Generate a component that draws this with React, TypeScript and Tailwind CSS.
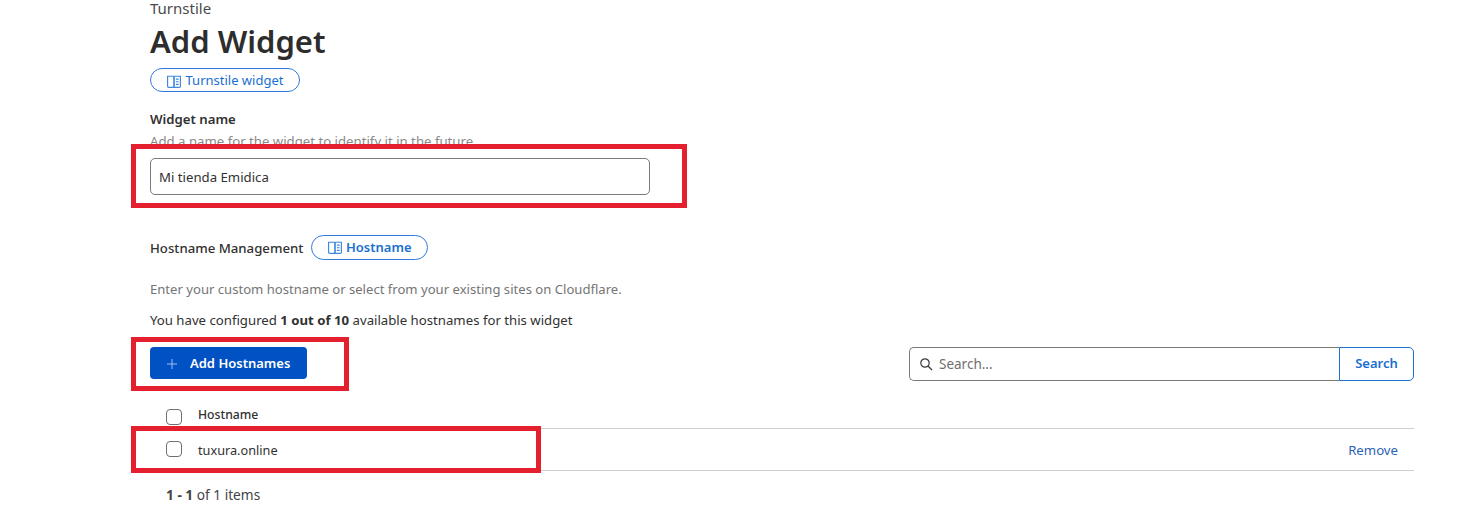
import React from 'react';

const BookIcon = ({ className }: { className?: string }) => (
  <svg viewBox="1 1.5 12 11" fill="none" stroke="currentColor" strokeWidth="1" className={className}>
    <path d="M1.5 2.5h4.5c.6 0 1 .4 1 1v8.5H2.5c-.6 0-1-.4-1-1z" />
    <path d="M12.5 2.5H7v9.5h4.5c.6 0 1-.4 1-1z" />
    <path d="M8.6 5h2.4M8.6 7.2h2.4M8.6 9.4h2.4" />
  </svg>
);

const DocPill = ({ label, className }: { label: string; className: string }) => (
  <a className={`flex items-center justify-center rounded-full border border-[#2f7bdc] bg-white text-[#1a6fd0] ${className}`}>
    <BookIcon className="w-[14px] h-[13px] text-[#3f88e0]" />
    {label}
  </a>
);

const Checkbox = ({ className = '' }: { className?: string }) => (
  <span className={`block w-4 h-4 rounded-[4px] border border-[#6f6f6f] bg-white ${className}`} />
);

// red annotation boxes drawn on top of the screenshot
const RedBox = ({ className }: { className: string }) => (
  <div className={`absolute border-[5px] border-[#e5202e] pointer-events-none ${className}`} />
);

export default function App() {
  return (
    <div className="relative h-[532px] w-[1457px] overflow-hidden bg-white font-['Noto_Sans','Open_Sans',sans-serif] text-[#313131]">
      <div className="pl-[150px] pr-[43px] pt-0">
        <p className="text-[15px] leading-[17px] text-[#4a4a4a]">Turnstile</p>
        <h1 className="mt-[6px] text-[31px] leading-[36px] font-semibold text-[#2d2d2d]">Add Widget</h1>
        <DocPill label="Turnstile widget" className="mt-[9px] pt-[2px] gap-[5px] w-[150px] h-[24px] text-[13px]" />

        <p className="mt-[18px] text-[13.2px] leading-[18px] font-semibold">Widget name</p>
        <p className="mt-[4px] text-[13.2px] leading-[18px] text-[#8a8a8a] h-[18px] overflow-hidden">Add a name for the widget to identify it in the future</p>
        <div className="mt-[8px] flex items-center w-[500px] h-[37px] px-2 pt-[2px] rounded-[5px] border border-[#7a7a7a] text-[13.2px]">Mi tienda Emidica</div>

        <div className="mt-[40px] flex items-center gap-2">
          <span className="mt-[3px] text-[13.2px] font-medium">Hostname Management</span>
          <DocPill label="Hostname" className="gap-[4px] w-[117px] h-[25px] text-[13px] font-semibold" />
        </div>
        <p className="mt-[20px] text-[13.1px] leading-[18px] text-[#757575]">Enter your custom hostname or select from your existing sites on Cloudflare.</p>
        <p className="mt-[13px] text-[13.2px] leading-[18px]">You have configured <b className="font-bold">1 out of 10</b> available hostnames for this widget</p>

        <div className="mt-[18px] flex items-start justify-between">
          <button className="flex items-center gap-[13px] h-[32px] w-[157px] pl-[17px] pt-[2px] rounded-[4px] bg-[#0051c3] text-white text-[13px] font-semibold">
            <svg viewBox="0 0 10 10" className="w-[10px] h-[10px]" stroke="#9cc0f0" strokeWidth="1"><path d="M5 0v10M0 5h10" /></svg>
            Add Hostnames
          </button>
          <div className="flex h-[34px] w-[505px]">
            <div className="flex flex-1 items-center gap-[6px] pl-[9px] rounded-l-[5px] border border-r-0 border-[#7a7a7a] text-[13.5px] text-[#6f6f6f]">
              <svg viewBox="0 0 14 14" fill="none" stroke="#3a3a3a" strokeWidth="1.2" className="w-[14px] h-[14px]"><circle cx="6" cy="6" r="4.2" /><path d="M9 9l4 4" /></svg>
              Search...
            </div>
            <button className="w-[75px] rounded-r-[5px] border border-[#1a6fd0] text-[13px] font-semibold text-[#1a6fd0]">Search</button>
          </div>
        </div>

        <div className="mt-[20px] flex items-center h-[27px] pl-4 gap-4 text-[12.2px] font-medium">
          <Checkbox className="mt-[4px]" />
          <span className="mt-[2px]">Hostname</span>
        </div>
        <div className="flex items-center justify-between h-[43px] pl-4 pr-4 border-y border-[#cfcfcf] text-[13.2px]">
          <div className="flex items-center gap-4 text-[12.7px]">
            <Checkbox />
            <span className="mt-[2px]">tuxura.online</span>
          </div>
          <a className="mt-[2px] text-[#2a63b5] text-[13.2px]">Remove</a>
        </div>
        <p className="mt-[15px] pl-4 text-[13.7px] leading-[18px] text-[#444]"><b className="font-bold">1 - 1</b> of 1 items</p>
      </div>

      <RedBox className="left-[131px] top-[144px] w-[556px] h-[64px]" />
      <RedBox className="left-[131px] top-[337px] w-[218px] h-[54px]" />
      <RedBox className="left-[131px] top-[426px] w-[410px] h-[47px]" />
    </div>
  );
}
